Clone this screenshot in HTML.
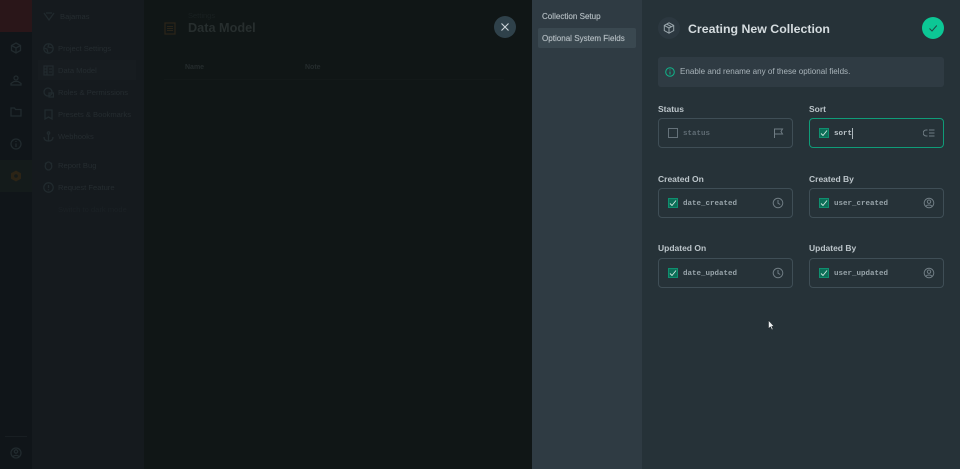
<!DOCTYPE html>
<html lang="en"><head><meta charset="utf-8"><title>Creating New Collection</title>
<style>
*{box-sizing:border-box}
html,body{margin:0;padding:0;width:960px;height:469px;overflow:hidden;background:#101616;font-family:"Liberation Sans",sans-serif}
#wrap{position:absolute;left:0;top:0;width:960px;height:469px;filter:blur(.35px)}
.a{position:absolute}
#rail{left:0;top:0;width:32px;height:469px;background:#101519}
#side{left:32px;top:0;width:112px;height:469px;background:#151a1e}
#main{left:144px;top:0;width:388px;height:469px;background:#101616}
.st{position:absolute;left:58px;font-size:7.6px;color:#252c30;white-space:nowrap}
.ic{position:absolute;fill:none;stroke:#212a2e;stroke-width:1.3}
#nav{left:532px;top:0;width:110px;height:469px;background:#2f3b43}
#modal{left:642px;top:0;width:318px;height:469px;background:#263238}
.ni{position:absolute;left:10px;font-size:8.05px;line-height:11px;color:#b4bdc2;white-space:nowrap;-webkit-text-stroke:.15px #b4bdc2}
.lab{position:absolute;font-size:8.5px;font-weight:bold;color:#bcc5ca;white-space:nowrap}
.box{position:absolute;width:135px;height:30px;border:1px solid #3f4e56;border-radius:4px}
.box.on{border-color:#0f9c78}
.cb{position:absolute;left:9px;top:9px;width:10px;height:10px;background:#0c6e57;border:1px solid #0f8f6f}
.cb svg{position:absolute;left:0;top:0}
.cb.off{background:none;border:1px solid #65727a}
.val{position:absolute;left:24px;top:10px;font:bold 7.5px/11px "Liberation Mono",monospace;color:#98a4aa;white-space:pre}
.val.off{color:#5f6c74}
.val.sel{color:#bcc5ca}
.bi{position:absolute;right:8px;top:8px;fill:none;stroke:#6f7c83;stroke-width:1}
</style></head><body><div id="wrap">
<div id="rail" class="a">
 <div class="a" style="left:0;top:0;width:32px;height:32px;background:#2a1619"></div>
 <div class="a" style="left:0;top:160px;width:32px;height:32px;background:#141b1b"></div>
 <svg class="ic" style="left:10px;top:42px" width="12" height="12" viewBox="0 0 12 12"><path d="M6 1l4.500 2.500v5L6 11 1.500 8.500v-5zM1.500 3.500L6 6l4.500-2.500M6 6v5"/></svg>
 <svg class="ic" style="left:10px;top:75px" width="12" height="11" viewBox="0 0 12 11"><circle cx="6" cy="3" r="2"/><path d="M1 10V8.500l3-2h4l3 2V10z"/></svg>
 <svg class="ic" style="left:10px;top:107px" width="12" height="10" viewBox="0 0 12 10"><path d="M1 1h3.500l1 1.500H11V9H1z"/></svg>
 <svg class="ic" style="left:10px;top:138px" width="12" height="12" viewBox="0 0 12 12"><circle cx="6" cy="6" r="5"/><path d="M6 5.500V9M6 3v1"/></svg>
 <svg class="a" style="left:10px;top:170px" width="12" height="12" viewBox="0 0 12 12"><path d="M6 .5l5 2.800v5.400L6 11.500 1 8.700V3.300z" fill="#2c2416"/><circle cx="6" cy="6" r="1.800" fill="#141b1b"/></svg>
 <div class="a" style="left:5px;top:436px;width:22px;height:1px;background:#181e22"></div>
 <svg class="ic" style="left:10px;top:447px" width="12" height="12" viewBox="0 0 12 12"><circle cx="6" cy="6" r="5"/><circle cx="6" cy="4.500" r="1.700"/><path d="M3 9.500c1.500-1.500 4.500-1.500 6 0"/></svg>
</div>
<div id="side" class="a">
 <div class="st" style="left:28px;top:12px">Bajamas</div>
 <svg class="ic" style="left:11px;top:10px" width="12" height="12" viewBox="0 0 12 12"><path d="M1 3l5 7 5-7"/><path d="M3 3h6"/></svg>
 <div class="a" style="left:6px;top:60px;width:98px;height:20px;background:#171c20"></div>
 <div class="st" style="left:26px;top:44px">Project Settings</div>
 <div class="st" style="left:26px;top:66px">Data Model</div>
 <div class="st" style="left:26px;top:88px">Roles &amp; Permissions</div>
 <div class="st" style="left:26px;top:110px">Presets &amp; Bookmarks</div>
 <div class="st" style="left:26px;top:132px">Webhooks</div>
 <div class="st" style="left:26px;top:161px">Report Bug</div>
 <div class="st" style="left:26px;top:183px">Request Feature</div>
 <div class="st" style="left:26px;top:205px;color:#1b2125">Switch to dark mode</div>
 <svg class="ic" style="left:11px;top:43px" width="11" height="11" viewBox="0 0 11 11"><circle cx="5.500" cy="5.500" r="4.700"/><path d="M1 5l3 1 1 4M6 1l-1 3 5 1"/></svg>
 <svg class="ic" style="left:11px;top:65px" width="11" height="11" viewBox="0 0 11 11"><rect x="1" y="1" width="9" height="9"/><path d="M4 1v9M1 4h3M1 7h3M6 4h3M6 7h3"/></svg>
 <svg class="ic" style="left:11px;top:87px" width="11" height="11" viewBox="0 0 11 11"><circle cx="5" cy="5" r="4"/><rect x="6" y="6" width="4.500" height="4"/></svg>
 <svg class="ic" style="left:12px;top:109px" width="9" height="11" viewBox="0 0 9 11"><path d="M1 1h7v9L4.500 8 1 10z"/></svg>
 <svg class="ic" style="left:11px;top:131px" width="11" height="11" viewBox="0 0 11 11"><circle cx="5.500" cy="2" r="1.200"/><path d="M5.500 3v7M1 6c0 3 2 4 4.500 4S10 9 10 6"/></svg>
 <svg class="ic" style="left:11px;top:160px" width="11" height="11" viewBox="0 0 11 11"><ellipse cx="5.500" cy="6" rx="3.300" ry="4"/><path d="M2 3l1.500 1M9 3L7.500 4"/></svg>
 <svg class="ic" style="left:11px;top:182px" width="11" height="11" viewBox="0 0 11 11"><circle cx="5.500" cy="5.500" r="4.700"/><path d="M5.500 3v3M5.500 7.300v1"/></svg>
</div>
<div id="main" class="a">
 <svg class="a" style="left:20px;top:22px" width="12" height="13" viewBox="0 0 12 13"><rect x="1" y="1" width="10" height="11" fill="none" stroke="#2a2418" stroke-width="1.300"/><path d="M3 4.500h6M3 6.500h6M3 8.500h6" stroke="#2a2418"/></svg>
 <div class="a" style="left:44px;top:11px;font-size:7.500px;color:#192021">Settings</div>
 <div class="a" style="left:44px;top:21px;font-size:12.700px;font-weight:bold;color:#272e2e;white-space:nowrap">Data Model</div>
 <div class="a" style="left:41px;top:64px;font-size:7px;font-weight:bold;color:#252c2d">Name</div>
 <div class="a" style="left:161px;top:64px;font-size:7px;font-weight:bold;color:#252c2d">Note</div>
 <div class="a" style="left:20px;top:79px;width:340px;height:1px;background:#131919"></div>
</div>
<div class="a" style="left:494px;top:16px;width:22px;height:22px;border-radius:50%;background:#2f414a">
 <svg class="a" style="left:6px;top:6px" width="10" height="10" viewBox="0 0 10 10"><path d="M1.500 1.500l7 7M8.500 1.500l-7 7" stroke="#ccd4d8" stroke-width="1.100" fill="none"/></svg>
</div>
<div id="nav" class="a">
 <div class="a" style="left:6px;top:28px;width:98px;height:20px;background:#3a4850;border-radius:2px"></div>
 <div class="ni" style="top:11px">Collection Setup</div>
 <div class="ni" style="top:33px">Optional System Fields</div>
</div>
<div id="modal" class="a">
 <div class="a" style="left:16px;top:17px;width:22px;height:22px;border-radius:50%;background:#2c3840">
  <svg class="a" style="left:5px;top:5px;fill:none;stroke:#9aa6ac;stroke-width:1" width="12" height="12" viewBox="0 0 12 12"><path d="M6 .8l4.700 2.600v5.200L6 11.200 1.300 8.600V3.400zM1.300 3.400L6 6l4.700-2.600M6 6v5.200M3.600 2.100l4.800 2.600"/></svg>
 </div>
 <div class="a" style="left:46px;top:21px;font-size:12.350px;line-height:16px;font-weight:bold;color:#d5dcdf;white-space:nowrap">Creating New Collection</div>
 <div class="a" style="left:280px;top:17px;width:22px;height:22px;border-radius:50%;background:#0cc795">
  <svg class="a" style="left:6px;top:6px" width="10" height="10" viewBox="0 0 10 10"><path d="M1.500 5.500L4 8l4.800-5.500" stroke="#1f4a44" stroke-width="1" fill="none"/></svg>
 </div>
 <div class="a" style="left:16px;top:57px;width:286px;height:30px;background:#2f3b43;border-radius:3px">
  <svg class="a" style="left:7px;top:10px" width="10" height="10" viewBox="0 0 10 10"><circle cx="5" cy="5" r="4.300" fill="none" stroke="#0fb58a" stroke-width="1"/><path d="M5 4.500v3M5 2.400v1" stroke="#0fb58a" stroke-width="1"/></svg>
  <div class="a" style="left:22px;top:9px;font-size:8.070px;line-height:11px;color:#a9b4ba;white-space:nowrap">Enable and rename any of these optional fields.</div>
 </div>

 <div class="lab" style="left:16px;top:104px">Status</div>
 <div class="box" style="left:16px;top:118px"><div class="cb off"></div><div class="val off">status</div>
  <svg class="bi" width="12" height="12" viewBox="0 0 12 12"><path d="M2.500 11V2h8l-1.500 2.500L10.500 7h-8"/></svg></div>
 <div class="lab" style="left:167px;top:104px">Sort</div>
 <div class="box on" style="left:167px;top:118px"><div class="cb"><svg width="8" height="8" viewBox="0 0 8 8"><path d="M1 4.500L3 6.500 7 1.500" stroke="#d3e9e2" stroke-width=".9" fill="none"/></svg></div><div class="val sel">sort</div>
  <div class="a" style="left:42px;top:9px;width:1px;height:11px;background:#aeb8bd"></div>
  <svg class="bi" width="12" height="12" viewBox="0 0 12 12"><path d="M4.500 3H3.200a3 3 0 0 0 0 6h1.300M6 3h5.500M6 6h5.500M6 9h5.500"/></svg></div>

 <div class="lab" style="left:16px;top:174px">Created On</div>
 <div class="box" style="left:16px;top:188px"><div class="cb"><svg width="8" height="8" viewBox="0 0 8 8"><path d="M1 4.500L3 6.500 7 1.500" stroke="#d3e9e2" stroke-width=".9" fill="none"/></svg></div><div class="val">date_created</div>
  <svg class="bi" width="12" height="12" viewBox="0 0 12 12"><circle cx="6" cy="6" r="4.800"/><path d="M6 3v3.200l2.200 1.300"/></svg></div>
 <div class="lab" style="left:167px;top:174px">Created By</div>
 <div class="box" style="left:167px;top:188px"><div class="cb"><svg width="8" height="8" viewBox="0 0 8 8"><path d="M1 4.500L3 6.500 7 1.500" stroke="#d3e9e2" stroke-width=".9" fill="none"/></svg></div><div class="val">user_created</div>
  <svg class="bi" width="12" height="12" viewBox="0 0 12 12"><circle cx="6" cy="6" r="4.800"/><circle cx="6" cy="4.700" r="1.700"/><path d="M2.800 9.300c1.500-1.700 4.900-1.700 6.400 0"/></svg></div>

 <div class="lab" style="left:16px;top:243px">Updated On</div>
 <div class="box" style="left:16px;top:258px"><div class="cb"><svg width="8" height="8" viewBox="0 0 8 8"><path d="M1 4.500L3 6.500 7 1.500" stroke="#d3e9e2" stroke-width=".9" fill="none"/></svg></div><div class="val">date_updated</div>
  <svg class="bi" width="12" height="12" viewBox="0 0 12 12"><circle cx="6" cy="6" r="4.800"/><path d="M6 3v3.200l2.200 1.300"/></svg></div>
 <div class="lab" style="left:167px;top:243px">Updated By</div>
 <div class="box" style="left:167px;top:258px"><div class="cb"><svg width="8" height="8" viewBox="0 0 8 8"><path d="M1 4.500L3 6.500 7 1.500" stroke="#d3e9e2" stroke-width=".9" fill="none"/></svg></div><div class="val">user_updated</div>
  <svg class="bi" width="12" height="12" viewBox="0 0 12 12"><circle cx="6" cy="6" r="4.800"/><circle cx="6" cy="4.700" r="1.700"/><path d="M2.800 9.300c1.500-1.700 4.900-1.700 6.400 0"/></svg></div>
</div>
<svg class="a" style="left:768px;top:320px" width="7" height="11" viewBox="0 0 7 11"><path d="M.5.500v8l2-1.700 1.300 3 1.200-.5-1.300-2.900H6z" fill="#eef1f2" stroke="#1a2226" stroke-width=".5"/></svg>
</div></body></html>
